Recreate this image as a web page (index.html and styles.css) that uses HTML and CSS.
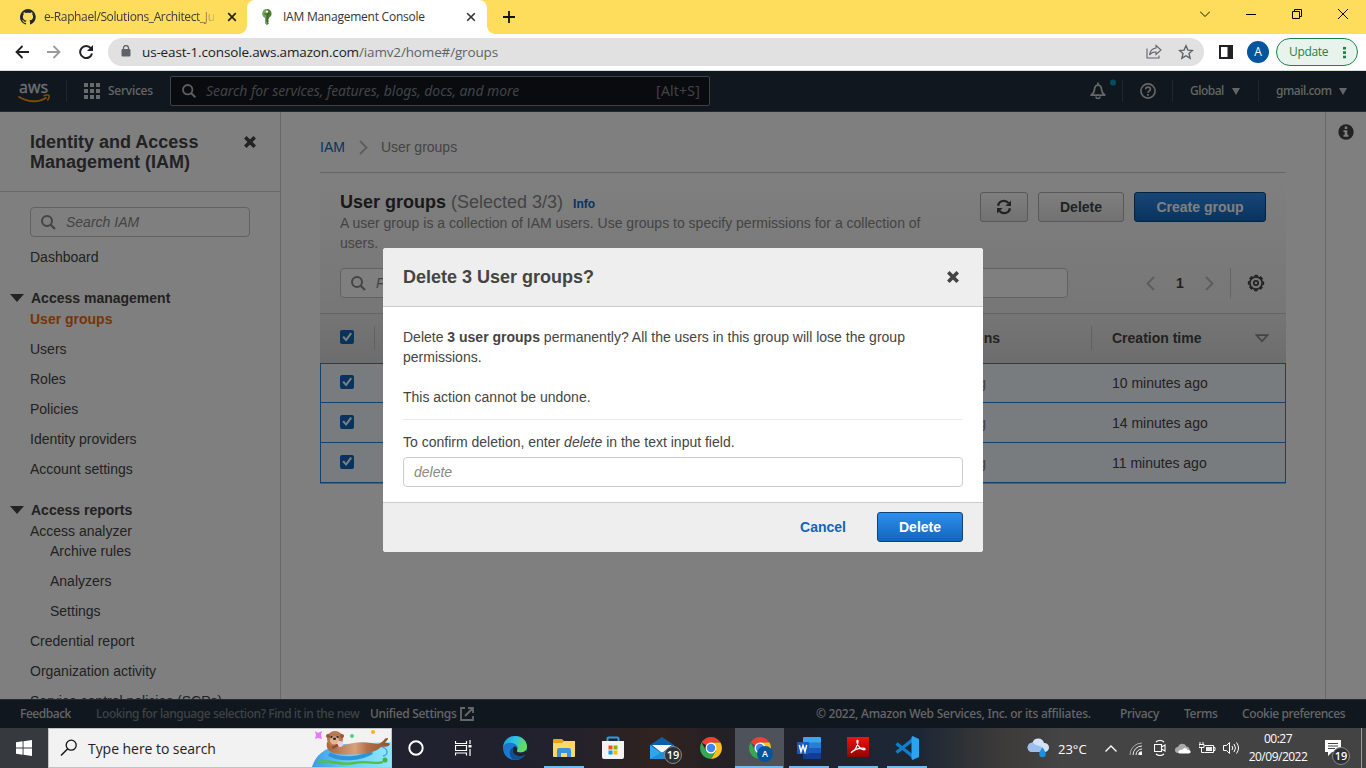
FILE: index.html
```html
<!DOCTYPE html>
<html lang="en">
<head>
<meta charset="utf-8">
<title>IAM Management Console</title>
<link rel="stylesheet" href="styles.css">
</head>
<body>
<header class="tabs">
  <div class="tab tab-idle">
    <svg width="16" height="16" viewBox="0 0 16 16"><path fill="#24292f" d="M8 0a8 8 0 0 0-2.5 15.6c.4 0 .5-.2.5-.4v-1.4c-2.200.5-2.700-1-2.700-1-.4-.9-.9-1.200-.9-1.200-.7-.5.1-.5.1-.5.8.1 1.200.8 1.200.8.7 1.300 1.900.9 2.300.7.1-.5.3-.9.500-1.100-1.800-.2-3.600-.9-3.600-4 0-.9.300-1.600.8-2.100-.1-.2-.4-1 .1-2.100 0 0 .7-.2 2.200.8a7.700 7.700 0 0 1 4 0c1.500-1 2.200-.8 2.200-.8.400 1.100.2 1.900.1 2.100.500.600.8 1.300.8 2.100 0 3.100-1.900 3.700-3.700 3.900.3.300.6.8.6 1.500v2.200c0 .2.100.5.500.4A8 8 0 0 0 8 0z"/></svg>
    <span class="tab-title fade">e-Raphael/Solutions_Architect_Ju</span>
    <svg class="tab-x" width="10" height="10" viewBox="0 0 10 10"><path d="M1.200 1.200l7.600 7.600M8.800 1.200l-7.600 7.600" stroke="#222" stroke-width="1.700"/></svg>
  </div>
  <div class="tab tab-active">
    <svg width="16" height="16" viewBox="0 0 16 16"><path fill="#4b7d35" d="M8 0a4.600 4.600 0 0 0-2 8.700V14l2 2 2-1.700-1-1.200 1-1.100-1-1.200 1-1V8.700A4.600 4.600 0 0 0 8 0z"/><path fill="#76a35c" d="M8 0a4.600 4.600 0 0 0-2 8.700V14l2 2z"/><circle cx="8" cy="2.600" r="1.200" fill="#fff"/><path d="M8 6v7M5.500 5h5" stroke="#2f5720"/></svg>
    <span class="tab-title">IAM Management Console</span>
    <svg class="tab-x" width="10" height="10" viewBox="0 0 10 10"><path d="M1.200 1.200l7.600 7.600M8.800 1.200l-7.600 7.600" stroke="#333" stroke-width="1.600"/></svg>
  </div>
  <svg class="tab-new" width="12" height="12" viewBox="0 0 12 12"><path d="M6 0v12M0 6h12" stroke="#111" stroke-width="1.800"/></svg>
  <div class="win">
    <svg width="10" height="10" viewBox="0 0 10 10"><path d="M0 2.500l5 5 5-5" fill="none" stroke="#111"/></svg>
    <svg width="10" height="10" viewBox="0 0 10 10"><path d="M0 5.500h10" stroke="#000"/></svg>
    <svg width="10" height="10" viewBox="0 0 10 10"><path d="M.5 2.500h7v7h-7zM2.500 2.500v-2h7v7h-2" fill="none" stroke="#000"/></svg>
    <svg width="10" height="10" viewBox="0 0 10 10"><path d="M0 0l10 10M10 0L0 10" stroke="#000"/></svg>
  </div>
</header>
<div class="toolbar">
  <svg class="tb-nav" width="14" height="14" viewBox="0 0 14 14"><path d="M14 7H1.500M7.500 1L1.500 7l6 6" fill="none" stroke="#202124" stroke-width="1.800"/></svg>
  <svg class="tb-nav" width="14" height="14" viewBox="0 0 14 14"><path d="M0 7h12.500M6.500 1l6 6-6 6" fill="none" stroke="#9a9a9a" stroke-width="1.800"/></svg>
  <svg class="tb-nav" width="14" height="14" viewBox="0 0 14 14"><path d="M11.800 3.200A6 6 0 1 0 13 8.500" fill="none" stroke="#202124" stroke-width="2"/><path d="M14 0v6H8z" fill="#202124"/></svg>
  <div class="omni">
    <svg width="10" height="12" viewBox="0 0 10 12"><path d="M2.500 5V3a2.500 2.500 0 0 1 5 0v2" fill="none" stroke="#5f6368" stroke-width="1.300"/><rect x=".5" y="4" width="9" height="7.500" rx="1" fill="#5f6368"/></svg>
    <span class="url">us-east-1.console.aws.amazon.com<em>/iamv2/home#/groups</em></span>
    <svg class="share" width="16" height="16" viewBox="0 0 16 16"><path d="M1 4.500v9.500h12v-2.500M10 1.500l5 4.500-5 4.500V8C7 7.800 5 8.800 3.500 11 4 7 6.500 4.500 10 4z" fill="none" stroke="#5f6368" stroke-width="1.100"/></svg>
    <svg width="16" height="16" viewBox="0 0 16 16"><path d="M8 1.800l1.900 4.300 4.600.4-3.500 3.100 1.100 4.600L8 11.700l-4.100 2.500L5 9.600 1.500 6.500l4.600-.4z" fill="none" stroke="#5f6368" stroke-width="1.400"/></svg>
  </div>
  <svg class="side-ic" width="14" height="14" viewBox="0 0 14 14"><path d="M1 1h12v12H1z" fill="none" stroke="#202124" stroke-width="2"/><path d="M8.500 0H14v14H8.500z" fill="#202124"/></svg>
  <span class="ava">A</span>
  <span class="update">Update<i class="dots"></i></span>
</div>

<div class="console">
  <nav class="nav">
    <svg class="aws" width="34" height="24" viewBox="0 0 34 24"><text x="1" y="13" class="aws-t" textLength="29" lengthAdjust="spacingAndGlyphs">aws</text><path d="M.5 16.500c9 6 20 6.500 28 1" fill="none" stroke="#f90" stroke-width="2"/><path d="M25.500 15.800c3-1 5-.8 5.500-.3s0 3-1.700 5" fill="none" stroke="#f90" stroke-width="1.500"/></svg>
    <i class="sep s1"></i>
    <svg class="grid9" width="16" height="16" viewBox="0 0 16 16" fill="#fff"><path d="M0 0h4v4H0zM6 0h4v4H6zM12 0h4v4h-4zM0 6h4v4H0zM6 6h4v4H6zM12 6h4v4h-4zM0 12h4v4H0zM6 12h4v4H6zM12 12h4v4h-4z"/></svg>
    <span class="services">Services</span>
    <div class="gsearch">
      <svg width="14" height="14" viewBox="0 0 14 14"><circle cx="5.700" cy="5.700" r="4.700" fill="none" stroke="#bbb" stroke-width="1.800"/><path d="M9 9l4.300 4.300" stroke="#bbb" stroke-width="2"/></svg>
      <span class="gs-ph">Search for services, features, blogs, docs, and more</span><span class="gs-key">[Alt+S]</span>
    </div>
    <div class="nav-right">
      <svg class="bell" width="28" height="22" viewBox="0 0 28 22"><path d="M8 3.500v2M1.200 16.200c2.300-2 3.300-3.200 3.300-5.700a3.500 4.500 0 0 1 7 0c0 2.500 1 3.700 3.300 5.700z" fill="none" stroke="#ccc" stroke-width="1.800" stroke-linejoin="round"/><path d="M6 17.500a2 2 0 0 0 4 0" fill="none" stroke="#ccc" stroke-width="1.600"/><circle cx="23" cy="3.500" r="3" fill="#00a1c9"/></svg>
      <i class="sep"></i>
      <svg class="help" width="16" height="16" viewBox="0 0 16 16"><circle cx="8" cy="8" r="7.100" fill="none" stroke="#ccc" stroke-width="1.700"/><path d="M5.700 6.300c0-3 4.700-3 4.700 0C10.400 8 8 8 8 9.800" fill="none" stroke="#ccc" stroke-width="1.700"/><path d="M7.100 11h1.800v1.700H7.100z" fill="#ccc"/></svg>
      <i class="sep"></i>
      <span class="nav-t global">Global</span><i class="tri"></i>
      <i class="sep s4"></i>
      <span class="nav-t gmail">gmail.com</span><i class="tri"></i>
    </div>
  </nav>

  <main class="main">
    <aside class="side">
      <div class="side-head"><h2>Identity and Access Management (IAM)</h2>
        <svg width="12" height="12" viewBox="0 0 12 12"><path d="M1.300 1.300l9.400 9.400M10.700 1.300l-9.400 9.400" stroke="#444" stroke-width="3.600"/></svg></div>
      <div class="field side-search"><svg width="15" height="15" viewBox="0 0 15 15"><circle cx="6" cy="6" r="5" fill="none" stroke="#888" stroke-width="2"/><path d="M9.500 9.500l4.500 4.500" stroke="#888" stroke-width="2.200"/></svg>Search IAM</div>
      <a class="item">Dashboard</a>
      <div class="group"><i class="caret"></i>Access management</div>
      <a class="item on">User groups</a>
      <a class="item">Users</a>
      <a class="item">Roles</a>
      <a class="item">Policies</a>
      <a class="item">Identity providers</a>
      <a class="item">Account settings</a>
      <div class="group"><i class="caret"></i>Access reports</div>
      <a class="item tight">Access analyzer</a>
      <a class="item sub">Archive rules</a>
      <a class="item sub">Analyzers</a>
      <a class="item sub">Settings</a>
      <a class="item">Credential report</a>
      <a class="item">Organization activity</a>
      <a class="item">Service control policies (SCPs)</a>
    </aside>
    <section class="content">
      <div class="crumbs"><a>IAM</a><svg width="9" height="15" viewBox="0 0 9 15"><path d="M1 1l6.500 6.500L1 14" fill="none" stroke="#bbb" stroke-width="1.900"/></svg><span>User groups</span></div>
      <div class="panel">
        <div class="panel-top">
          <div class="titles">
            <h1>User groups <span>(Selected 3/3)</span><a>Info</a></h1>
            <p>A user group is a collection of IAM users. Use groups to specify permissions for a collection of users.</p>
          </div>
          <div class="btns">
            <span class="btn refresh"><svg width="16" height="16" viewBox="0 0 16 16"><path d="M2 6.800A6 6 0 0 1 12.500 4M14 9.200A6 6 0 0 1 3.500 12" fill="none" stroke="#444" stroke-width="2.200"/><path d="M15 1.500V7H9.500zM1 14.500V9h5.500z" fill="#444"/></svg></span>
            <span class="btn del">Delete</span>
            <span class="btn primary create">Create group</span>
          </div>
        </div>
        <div class="filter">
          <div class="field filter-box"><svg width="15" height="15" viewBox="0 0 15 15"><circle cx="6" cy="6" r="5" fill="none" stroke="#888" stroke-width="2"/><path d="M9.500 9.500l4.500 4.500" stroke="#888" stroke-width="2.200"/></svg>Filter</div>
          <div class="pager">
            <svg width="9" height="15" viewBox="0 0 9 15"><path d="M8 1L1.500 7.500 8 14" fill="none" stroke="#bbb" stroke-width="2"/></svg>
            <b>1</b>
            <svg width="9" height="15" viewBox="0 0 9 15"><path d="M1 1l6.500 6.500L1 14" fill="none" stroke="#bbb" stroke-width="2"/></svg>
          </div>
          <svg class="gear" width="18" height="18" viewBox="0 0 18 18"><circle cx="9" cy="9" r="7.400" fill="none" stroke="#444" stroke-width="1.600" stroke-dasharray="3.600 2.210" stroke-dashoffset="1.800"/><circle cx="9" cy="9" r="6.200" fill="none" stroke="#444" stroke-width="1.700"/><circle cx="9" cy="9" r="2.200" fill="none" stroke="#444" stroke-width="1.700"/></svg>
        </div>
        <div class="row thead">
          <i class="cb"></i><span class="c-perm">Permissions</span><span class="c-time">Creation time</span><svg width="14" height="9" viewBox="0 0 14 9"><path d="M1.500 1.200h11L7 7.300z" fill="none" stroke="#888" stroke-width="1.700"/></svg>
        </div>
        <div class="row first"><i class="cb"></i><span class="c-perm">Loading</span><span class="c-time">10 minutes ago</span></div>
        <div class="row"><i class="cb"></i><span class="c-perm">Loading</span><span class="c-time">14 minutes ago</span></div>
        <div class="row last"><i class="cb"></i><span class="c-perm">Loading</span><span class="c-time">11 minutes ago</span></div>
      </div>
    </section>
    <aside class="rail"><svg width="16" height="16" viewBox="0 0 16 16"><circle cx="8" cy="8" r="7.700" fill="#444"/><path d="M6.700 2.600h2.600v2.300H6.700zM5.500 6.200h3.800v4.600h1.200v1.900h-5v-1.900h1.200V8H5.500z" fill="#fff"/></svg></aside>
  </main>

  <footer class="foot">
    <span class="f1">Feedback</span>
    <span class="f2">Looking for language selection? Find it in the new</span>
    <span class="f3">Unified Settings</span>
    <svg width="14" height="14" viewBox="0 0 14 14"><path d="M5 1H1v12h12V9M8 1h5v5M13 1L5 9" fill="none" stroke="#ccc" stroke-width="1.800"/></svg>
    <span class="f4">© 2022, Amazon Web Services, Inc. or its affiliates.</span>
    <span class="f5">Privacy</span><span class="f6">Terms</span><span class="f7">Cookie preferences</span>
  </footer>

  <div class="overlay">
    <div class="modal">
      <div class="m-head">Delete 3 User groups?<svg width="12" height="12" viewBox="0 0 12 12"><path d="M1.300 1.300l9.400 9.400M10.700 1.300l-9.400 9.400" stroke="#444" stroke-width="3.600"/></svg></div>
      <div class="m-body">
        <p>Delete <b>3 user groups</b> permanently? All the users in this group will lose the group permissions.</p>
        <p>This action cannot be undone.</p>
        <label>To confirm deletion, enter <i>delete</i> in the text input field.</label>
        <div class="m-input">delete</div>
      </div>
      <div class="m-foot"><a>Cancel</a><span class="btn primary del">Delete</span></div>
    </div>
  </div>
</div>

<div class="taskbar">
  <div class="start"><svg width="16" height="16" viewBox="0 0 16 16" fill="#fff"><path d="M0 2.200L6.600 1.300v6.200H0zM7.500 1.200L16 0v7.500H7.500zM0 8.400h6.600v6.300L0 13.800zM7.500 8.400H16V16l-8.500-1.200z"/></svg></div>
  <div class="tsearch">
    <svg width="18" height="18" viewBox="0 0 18 18"><circle cx="11.200" cy="6.200" r="5" fill="none" stroke="#111" stroke-width="1.300"/><path d="M7.500 9.900L1 16.500" stroke="#111" stroke-width="1.400"/></svg>
    <span>Type here to search</span>
    <svg class="otter" width="80" height="38" viewBox="0 0 80 38">
      <defs><linearGradient id="w" x2="1"><stop offset="0" stop-color="#3d9be6"/><stop offset=".5" stop-color="#6fd0f7"/><stop offset="1" stop-color="#8be8fd"/></linearGradient><linearGradient id="o" x2="1"><stop offset="0" stop-color="#a5643f"/><stop offset=".45" stop-color="#d8a07c"/><stop offset=".65" stop-color="#b06f48"/><stop offset="1" stop-color="#95512d"/></linearGradient></defs>
      <path d="M1 38C5 24 17 17 34 15l46-2v25z" fill="url(#w)"/>
      <path d="M18 25c12 7 32 5 43-2" fill="none" stroke="#2e93dc" stroke-width="4"/>
      <path d="M16 13C14 24 24 26 40 25.500c15 0 24-2 30-7.500l6-.5c3-1 4-3 1-3.500h-3l3-4c0-2-3-1-4 1-4 5-8 4-13 3-12-2-22 1-30 3z" fill="url(#o)"/>
      <circle cx="24" cy="10" r="8" fill="#b87952"/><circle cx="17" cy="7" r="2" fill="#955632"/><circle cx="31" cy="7" r="2" fill="#955632"/>
      <ellipse cx="23.500" cy="11.500" rx="4.500" ry="4" fill="#e2b594"/><circle cx="20.500" cy="8" r="1" fill="#222"/><circle cx="26.500" cy="8" r="1" fill="#222"/><ellipse cx="23.500" cy="9.800" rx="1.600" ry="1.200" fill="#33211c"/>
      <circle cx="29" cy="15" r="3" fill="#e8cfe6"/><path d="M21 19l6-3" stroke="#8e5233" stroke-width="3"/>
      <path d="M7 33c12-3 22 4 36 1s22 2 29-1" fill="none" stroke="#4cc43e" stroke-width="2.400"/><circle cx="74" cy="31" r="2.500" fill="#42b53c"/>
      <path d="M71 18c7 2 6 8 1 9" fill="none" stroke="#3aa3e0" stroke-width="1.300"/>
      <path d="M4 2l3 2 4-2-1 4 1 4-4-1-3 1 1-4z" fill="#e37bf5"/><circle cx="41" cy="7" r="2" fill="#4ed27a"/><circle cx="62" cy="3" r="2" fill="#ffb01f"/>
    </svg>
  </div>
  <div class="ti w48"><svg width="16" height="16" viewBox="0 0 16 16"><circle cx="8" cy="8" r="6.700" fill="none" stroke="#fff" stroke-width="2"/></svg></div>
  <div class="ti w50"><svg width="17" height="16" viewBox="0 0 17 16"><path d="M.5 1v2.500h11V1M.5 5.500h11v5H.5zM.5 15.500V13h11v2.500M15 0v4M15 9v7" fill="none" stroke="#fff" stroke-width="1.200"/><path d="M13.500 5h3v2.500h-3z" fill="#fff"/></svg></div>
  <div class="ti"><svg width="24" height="24" viewBox="0 0 24 24"><defs><linearGradient id="e1" x2="1" y2=".4"><stop offset="0" stop-color="#1f8fe0"/><stop offset=".5" stop-color="#2cc3e3"/><stop offset="1" stop-color="#66dd58"/></linearGradient><linearGradient id="e2" y2="1" x2=".6"><stop offset="0" stop-color="#1d6fc0"/><stop offset="1" stop-color="#1583d8"/></linearGradient></defs><circle cx="12" cy="12" r="12" fill="url(#e2)"/><path d="M0 11C1 4 6 0 12 0c7 0 12 5 12 10.500 0 4-3 6-6.500 6-3 0-4-1-3.500-2 1.500-2 1-5.500-3-7C7 6 2 7 0 11z" fill="url(#e1)"/><path d="M14 14.500c-.5 1 .5 2 3.500 2 2.600 0 4.700-1 5.700-2.700L24 17l-2 2c-6 3-13 0-12.500-5 .1-2 1-3.500 2.500-3.700 2 .7 2.600 3 2 4.200z" fill="#22222f"/><path d="M9.500 14c-.5 5 6.500 8 12.500 5-3 4.500-8 5.500-12 4.500C6 21 5 14 10.500 11c-.6.800-1 2-1 3z" fill="#114e94"/></svg></div>
  <div class="ti run"><svg width="22" height="20" viewBox="0 0 22 20"><path d="M0 2a1 1 0 0 1 1-1h8l2 2h11v15H0z" fill="#e8a317"/><path d="M0 5h9l2-2h11v15a1 1 0 0 1-1 1H1a1 1 0 0 1-1-1z" fill="#ffd868"/><path d="M4 19v-7a2 2 0 0 1 2-2h10a2 2 0 0 1 2 2v7h-4v-4H8v4z" fill="#3a94dc"/></svg></div>
  <div class="ti"><svg width="24" height="24" viewBox="0 0 24 24"><path d="M6.500 6V2.500a1 1 0 0 1 1-1h9a1 1 0 0 1 1 1V6" fill="none" stroke="#1fa3e8" stroke-width="2"/><path d="M1 5h22v16a2 2 0 0 1-2 2H3a2 2 0 0 1-2-2z" fill="#f3f3f3"/><path d="M7.500 9.500h4v4h-4z" fill="#f25022"/><path d="M12.500 9.500h4v4h-4z" fill="#7fba00"/><path d="M7.500 14.500h4v4h-4z" fill="#00a4ef"/><path d="M12.500 14.500h4v4h-4z" fill="#ffb900"/></svg></div>
  <div class="ti mail"><svg width="24" height="22" viewBox="0 0 24 22"><path d="M0 8l12-8 12 8v14H0z" fill="#0d5ea8"/><path d="M2 8h20l-10 8z" fill="#f4f6f8"/><path d="M0 8l12 8.500L24 8v14H0z" fill="#2aa8ee"/><path d="M0 22l12-7 12 7z" fill="#1f8fd9"/></svg><b class="count">19</b></div>
  <div class="ti"><svg width="22" height="22" viewBox="0 0 22 22"><g id="chrome"><path d="M11 11L1.500 5.500A11 11 0 0 1 20.500 5.500H11z" fill="#ea4335"/><path d="M11 5.500h9.500A11 11 0 0 1 11 22l4.800-8.300z" fill="#fbc116"/><path d="M1.500 5.500A11 11 0 0 0 11 22l4.800-8.300L11 11l-4.800 2.700z" fill="#34a853"/><circle cx="11" cy="11" r="5.500" fill="#fff"/><circle cx="11" cy="11" r="4.200" fill="#4285f4"/></g></svg></div>
  <div class="ti current"><svg width="22" height="22" viewBox="0 0 22 22"><use href="#chrome"/></svg><b class="prof">A</b></div>
  <div class="ti run"><svg width="24" height="22" viewBox="0 0 24 22"><path d="M6 1a1 1 0 0 1 1-1h16a1 1 0 0 1 1 1v5H6z" fill="#41a5ee"/><path d="M6 5.500h18V11H6z" fill="#2b7cd3"/><path d="M6 11h18v5.500H6z" fill="#185abd"/><path d="M6 16.500h18V21a1 1 0 0 1-1 1H7a1 1 0 0 1-1-1z" fill="#103f91"/><rect y="5" width="12" height="12" rx="1" fill="#185abd"/><path d="M2.300 8l1.700 6.500L6 8.500l2 6L9.700 8" fill="none" stroke="#fff" stroke-width="1.500"/></svg></div>
  <div class="ti run acro"><svg width="22" height="20" viewBox="0 0 22 20"><defs><linearGradient id="r" y2="1" x2="0"><stop offset="0" stop-color="#f50f0f"/><stop offset="1" stop-color="#8d0606"/></linearGradient></defs><path d="M0 0h22v20H0z" fill="url(#r)"/><path d="M4.500 15.500c3-1.500 6.500-7 6.500-11 0-2-1.500-1.500-1 1 .8 4 4 7 7 7.300 1.700 0 1.500-1.600-1-1.600-4 0-8 1.300-10.500 3-1.500 1-1.500 1.700-1 1.300z" fill="none" stroke="#fff" stroke-width="1.200"/></svg></div>
  <div class="ti run"><svg width="24" height="24" viewBox="0 0 24 24"><path d="M1.500 7.500L18 20.500M1.500 16.500L18 3.500" stroke="#0f7fcb" stroke-width="3.400"/><path d="M17.500 0L24 3v18l-6.500 3-1-1.500V1.500z" fill="#27a5f2"/></svg></div>
  <div class="tray">
    <svg width="23" height="20" viewBox="0 0 23 20"><path d="M5 14a4.600 4.600 0 0 1 .5-9.200A6 6 0 0 1 17 5a4.500 4.500 0 0 1 1 9z" fill="#d3e2f7"/><path d="M5 14a4.600 4.600 0 0 1-1-9c2-1 3 1 5 2s6 1 7 3 1 4 0 4z" fill="#9dbdec"/><path d="M15.500 9.500c2 3 3.300 4.500 3.300 6.500a3.300 3.300 0 0 1-6.600 0c0-2 1.300-3.500 3.300-6.500z" fill="#1791e0"/></svg>
    <span class="temp">23°C</span>
    <svg class="chev" width="12" height="7" viewBox="0 0 12 7"><path d="M.5 6.500L6 1l5.500 5.500" fill="none" stroke="#fff" stroke-width="1.300"/></svg>
    <svg class="wifi" width="13" height="13" viewBox="0 0 13 13"><g fill="none" stroke="#eee"><path d="M1 13A12 12 0 0 1 13 1" stroke="#aaa"/><path d="M4 13a9 9 0 0 1 9-9M7 13a6 6 0 0 1 6-6"/><path d="M10 13a3 3 0 0 1 3-3" stroke-width="1.500"/></g><path d="M10.500 10.500H13V13h-2.500z" fill="#fff"/></svg>
    <svg class="meet" width="12" height="16" viewBox="0 0 12 16"><path d="M.5 4.500h7v7h-7zM7.500 7l3.500-2v6L7.500 9M2 2c2-2 6-2 8 0M2 14c2 2 6 2 8 0" fill="none" stroke="#fff" stroke-width="1.100"/></svg>
    <svg class="cloud" width="16" height="11" viewBox="0 0 16 11"><path d="M3 10a3 3 0 0 1 0-6 4.500 4.500 0 0 1 8.500-.5A3.500 3.500 0 0 1 13 10z" fill="#aaa"/><path d="M4 10.500c-2-2 1-4.500 3-3.500 2-3 5-2 5.500 0 4-.5 4 3.500 1 3.500z" fill="#fff"/></svg>
    <svg class="batt" width="17" height="12" viewBox="0 0 17 12"><path d="M5.500 3.500h9v7h-9M14.500 5.500h1.500v3h-1.500M0 2.500h5v3H0zM1 0v2.500M4 0v2.500M2.500 5.500v5h3" fill="none" stroke="#fff"/><path d="M7 5h6v4H7z" fill="#eee"/></svg>
    <svg class="vol" width="17" height="14" viewBox="0 0 17 14"><path d="M.5 4.500h3l3-3v11l-3-3h-3zM9 5q1.500 2 0 4M11 3q3 4 0 8M13.500 1.500q4 5.500 0 11" fill="none" stroke="#fff"/></svg>
    <span class="clock"><span>00:27</span><span>20/09/2022</span></span>
    <span class="notif"><svg width="16" height="16" viewBox="0 0 16 16"><path d="M0 0h16v12H7l-4 4v-4H0z" fill="#fff"/><path d="M3 3.500h10M3 6h10M3 8.500h7" stroke="#444"/></svg><b class="count">19</b></span>
    <i class="desk"></i>
  </div>
</div>
</body>
</html>
```
FILE: styles.css
```css
* { box-sizing: border-box; }
body { margin: 0; width: 1366px; height: 768px; overflow: hidden; display: flex; flex-direction: column; font: 14px/20px "Liberation Sans", Arial, sans-serif; color: #444; background: #fff; }
svg { display: block; flex: none; }
h1, h2, p { margin: 0; }
span, a { white-space: nowrap; }

.tabs { flex: none; height: 34px; background: #ffdd5c; display: flex; align-items: center; font: 12px/16px "Open Sans", sans-serif; letter-spacing: -.24px; color: #3a3a3a; }
.tab { display: flex; align-items: center; height: 34px; }
.tab-idle { width: 247px; padding-left: 20px; }
.tab-title { margin-left: 8px; width: 174px; }
.fade { letter-spacing: -.38px; -webkit-mask-image: linear-gradient(90deg, #000 87%, transparent); mask-image: linear-gradient(90deg, #000 87%, transparent); }
.tab-x { margin-left: 9px; }
.tab-active { width: 240px; padding-left: 12px; background: #fff; border-radius: 8px 8px 0 0; position: relative; color: #333; }
.tab-active .tab-title { width: 182px; }
.tab-active .tab-x { margin-left: 1px; }
.tab-active::before, .tab-active::after { content: ""; position: absolute; bottom: 0; width: 8px; height: 8px; }
.tab-active::before { left: -8px; background: radial-gradient(circle at 0 0, #ffdd5c 7.500px, #fff 8px); }
.tab-active::after { right: -8px; background: radial-gradient(circle at 100% 0, #ffdd5c 7.500px, #fff 8px); }
.tab-new { margin-left: 16px; }
.win { margin-left: auto; display: flex; gap: 36px; padding: 0 18px 6px 0; }

.toolbar { flex: none; height: 37px; display: flex; align-items: center; background: #fff; border-bottom: 1px solid #d5dcd9; padding: 0 8px 0 15px; font-family: "Open Sans", sans-serif; }
.tb-nav { margin-right: 18px; }
.omni { width: 1096px; height: 28px; margin-left: -3px; border-radius: 14px; background: #e1e1e1; display: flex; align-items: center; padding: 0 10px 0 13px; }
.omni svg:first-child { margin-bottom: 2px; }
.url { margin-left: 11px; color: #202124; font-size: 13.5px; letter-spacing: -.15px; }
.url em { font-style: normal; color: #5f6368; }
.share { margin-left: auto; margin-right: 16px; }
.side-ic { margin-left: 15px; }
.ava { margin-left: 14px; width: 22px; height: 22px; border-radius: 50%; background: #04559f; color: #fff; font-size: 12px; line-height: 22px; text-align: center; }
.update { margin-left: 7px; width: 82px; height: 28px; border: 1px solid #1e8245; border-radius: 14px; background: #e9f3ee; color: #1e8245; font-size: 12px; letter-spacing: -.35px; line-height: 26px; padding-left: 12px; display: flex; align-items: center; }
.dots { width: 3px; height: 13px; margin-left: 15px; background: radial-gradient(circle, #1e8245 1.500px, transparent 1.700px) 0 0 / 3px 4.400px; }

.console { flex: none; height: 657px; position: relative; display: flex; flex-direction: column; background: #fff; }
.nav { flex: none; height: 41px; background: #232f3e; border-bottom: 1px solid #4d525a; display: flex; align-items: center; padding-left: 18px; font-family: "Noto Sans", sans-serif; color: #ccc; }
.aws-t { font: 400 17px "Noto Sans", sans-serif; fill: #ddd; stroke: #ddd; stroke-width: .3px; }
.aws { margin-top: 1px; overflow: visible; }
.sep { width: 1px; height: 22px; background: #444b55; }
.s1 { margin-left: 14px; }
.grid9 { margin-left: 17px; opacity: .8; }
.services { margin-left: 8px; width: 62px; font-size: 12px; font-weight: 500; letter-spacing: -.25px; }
.gsearch { width: 540px; height: 30px; border: 1px solid #7f868c; border-radius: 2px; background: #14171e; display: flex; align-items: center; padding: 0 9px 0 11px; color: #7f868c; }
.gs-ph { margin-left: 10px; font-style: italic; font-size: 14px; letter-spacing: -.07px; }
.gs-key { margin-left: auto; font-size: 14px; letter-spacing: .2px; }
.nav-right { margin-left: auto; display: flex; align-items: center; font-size: 12px; font-weight: 500; letter-spacing: -.5px; padding-right: 19px; }
.bell { margin-right: 4px; margin-bottom: 2px; }
.help { margin: 0 16px 0 17px; }
.global { margin-left: 17px; width: 42px; }
.gmail { margin-left: 17px; width: 63px; }
.s4 { margin-left: 18px; }
.tri { width: 0; height: 0; border: 4px solid transparent; border-top: 7px solid #ccc; border-bottom: 0; }

.main { flex: none; height: 587px; display: flex; overflow: hidden; }
.side { width: 281px; border-right: 1px solid #d0d0d0; display: flex; flex-direction: column; flex: none; }
.side-head { flex: none; height: 80px; border-bottom: 1px solid #d0d0d0; padding: 20px 24px 0 30px; display: flex; justify-content: space-between; }
.side-head svg { margin-top: 4px; }
.side-head h2 { width: 190px; font-size: 18px; line-height: 20px; }
.field { height: 30px; flex: none; border: 1px solid #c4c4c4; border-radius: 4px; background: #fff; display: flex; align-items: center; gap: 10px; padding-left: 10px; font-style: italic; color: #888; }
.side-search { margin: 15px 30px 5px; }
.item { flex: none; height: 20px; margin: 5px 0 5px 30px; }
.group { flex: none; height: 20px; margin: 16px 0 -4px 10px; font-weight: bold; display: flex; align-items: center; gap: 7px; }
.item.on { color: #ec6a10; font-weight: bold; }
.item.tight { margin-bottom: -5px; }
.item.sub { margin-left: 50px; }
.caret { width: 0; height: 0; border: 7px solid transparent; border-top: 8px solid #444; border-bottom: 0; }

.content { flex: 1; padding: 25px 39px 0; }
.crumbs { height: 36px; border-bottom: 1px solid #ccc; display: flex; color: #888; }
.crumbs a { color: #1166bb; }
.crumbs svg { margin: 3px 13px 0 14px; }
.panel-top { height: 95px; padding: 19px 20px 0; display: flex; justify-content: space-between; background: linear-gradient(#fff, #f3f3f3); }
.titles { width: 600px; color: #888; }
h1 { font-size: 18px; line-height: 20px; height: 21px; color: #333; }
h1 span { font-weight: normal; color: #888; }
h1 a { font-size: 12px; color: #1166bb; margin-left: 10px; }
.btns { display: flex; gap: 10px; }
.btn { height: 30px; border: 1px solid #b0b0b0; border-radius: 3px; background: linear-gradient(#fff, #e4e4e4); font-weight: bold; line-height: 28px; text-align: center; display: block; }
.refresh { width: 48px; display: flex; align-items: center; justify-content: center; }
.del { width: 86px; }
.create { width: 132px; }
.primary { background: linear-gradient(#2f8ded, #1166bb); border-color: #0b447c; color: #fff; }
.filter { height: 46px; padding: 0 20px; display: flex; background: linear-gradient(#f3f3f3, #eee); border-bottom: 1px solid #c8c8c8; }
.filter-box { width: 728px; }
.pager { width: 163px; height: 30px; border-right: 1px solid #c8c8c8; display: flex; align-items: center; padding-left: 78px; gap: 21px; }
.gear { margin: 6px 0 0 16px; }
.row { height: 40px; border: 1px solid #2b83db; border-top: 0; background: #f1f8fe; display: flex; align-items: center; padding-left: 19px; }
.thead { height: 50px; background: linear-gradient(#ebebeb, #dadada); border: 0; border-bottom: 1px solid #2b83db; padding: 0 17px 1px 20px; font-weight: bold; }
.first { height: 39px; }
.last { box-shadow: 0 1px #bbb; }
.cb { width: 14px; height: 14px; border-radius: 2px; background: #1166bb; margin-bottom: 2px; position: relative; }
.cb::after { content: ""; position: absolute; inset: 0; background: #fff; clip-path: polygon(2.300px 7.300px, 4px 6px, 6px 8.600px, 10.300px 2.600px, 12px 3.700px, 6.200px 11.600px); }
.c-perm { width: 52px; margin-left: 580px; color: #888; text-align: right; }
.thead .c-perm { width: 86px; margin-left: 560px; color: #444; }
.c-time { margin-left: 126px; }
.thead .c-time { margin-left: 91px; padding-left: 20px; border-left: 1px solid #c2c2c2; line-height: 24px; }
.thead svg { margin-left: auto; }
.thead .cb::before { content: ""; position: absolute; left: 34px; top: -4px; width: 1px; height: 24px; background: #c2c2c2; }
.rail { width: 41px; border-left: 1px solid #d0d0d0; padding: 12px 0 0 12px; }

.foot { flex: none; height: 29px; background: #232f3e; border-top: 1px solid #4d525a; display: flex; align-items: center; padding: 0 20px; font: 500 12px/16px "Noto Sans", sans-serif; letter-spacing: -.3px; color: #ccc; }
.f1 { width: 76px; letter-spacing: -.45px; }
.f2 { width: 274px; color: #7f868c; letter-spacing: -.42px; }
.f3 { width: 90px; }
.f4 { margin-left: auto; width: 304px; letter-spacing: -.24px; }
.f5 { width: 64px; }
.f6 { width: 58px; }
.f7 { width: 104px; letter-spacing: -.4px; }

.overlay { position: absolute; inset: 0; background: rgba(0, 0, 0, .5); display: flex; align-items: center; justify-content: center; padding-top: 1px; }
.modal { width: 600px; height: 304px; background: #fff; border-radius: 3px; overflow: hidden; }
.m-head { height: 59px; background: #eee; border-bottom: 1px solid #ccc; padding: 0 24px 0 20px; display: flex; align-items: center; justify-content: space-between; font-size: 18px; font-weight: bold; }
.m-body { height: 195px; padding: 20px 20px 0; }
.m-body p { padding-bottom: 20px; }
.m-body p + p { padding-bottom: 12px; border-bottom: 1px solid #eaeaea; }
.m-body label { display: block; padding: 12px 0 5px; }
.m-input { height: 30px; border: 1px solid #ccc; border-radius: 4px; padding-left: 10px; line-height: 28px; font-style: italic; color: #888; }
.m-foot { height: 50px; background: #eee; border-top: 1px solid #ccc; padding: 9px 20px 0; display: flex; justify-content: flex-end; gap: 31px; line-height: 30px; }
.m-foot a { color: #1166bb; font-weight: bold; }

.taskbar { flex: none; height: 40px; display: flex; align-items: center; background: linear-gradient(90deg, #36393d 0, #36393d 48px, #20222f 400px, #22212d 560px, #31231f 660px, #242025 720px, #1c2534 860px, #1d2734 920px, #3c3a39 1000px, #444 1060px, #434344 1366px); font-family: "Open Sans", sans-serif; color: #fff; }
.start { width: 48px; display: flex; justify-content: center; }
.tsearch { width: 344px; height: 40px; background: #f2f2f2; border: 1px solid #c3c3c3; display: flex; align-items: center; padding-left: 11px; color: #222; }
.tsearch span { margin-left: 10px; padding-top: 2px; font-size: 14px; letter-spacing: -.05px; }
.otter { margin-left: auto; }
.ti { width: 49px; height: 40px; display: flex; align-items: center; justify-content: center; position: relative; }
.w48 { width: 48px; }
.w50 { width: 50px; padding-right: 3px; }
.acro svg { margin-bottom: 2px; }
.run { background: linear-gradient(#76b9ed, #76b9ed) 50% 100% / 40px 2px no-repeat; }
.current { background: linear-gradient(#76b9ed, #76b9ed) 0 100% / 48px 2px no-repeat, #4e525a; }
.count, .prof { position: absolute; left: 27px; top: 18px; width: 18px; height: 18px; border-radius: 50%; border: 1px solid #888; background: #2c3338; color: #fff; font: 600 11px/16px "Open Sans", sans-serif; text-align: center; }
.prof { background: #04559f; border: 0; left: 22px; width: 16px; height: 16px; font-size: 9px; line-height: 16px; }
.tray { margin-left: auto; display: flex; align-items: center; height: 40px; font-size: 13px; }
.temp { margin-left: 8px; width: 30px; padding-top: 1px; }
.chev { margin-left: 17px; }
.wifi { margin-left: 12px; }
.meet { margin-left: 12px; }
.cloud { margin-left: 9px; }
.batt { margin-left: 8px; }
.vol { margin-left: 7px; }
.clock { margin-left: 8px; width: 60px; display: flex; flex-direction: column; align-items: center; font-size: 12px; letter-spacing: -.5px; line-height: 18px; }
.notif { position: relative; margin-left: 17px; }
.notif .count { left: 7px; top: 7px; }
.desk { width: 1px; height: 40px; margin: 0 4px 0 20px; background: #999; }
```
